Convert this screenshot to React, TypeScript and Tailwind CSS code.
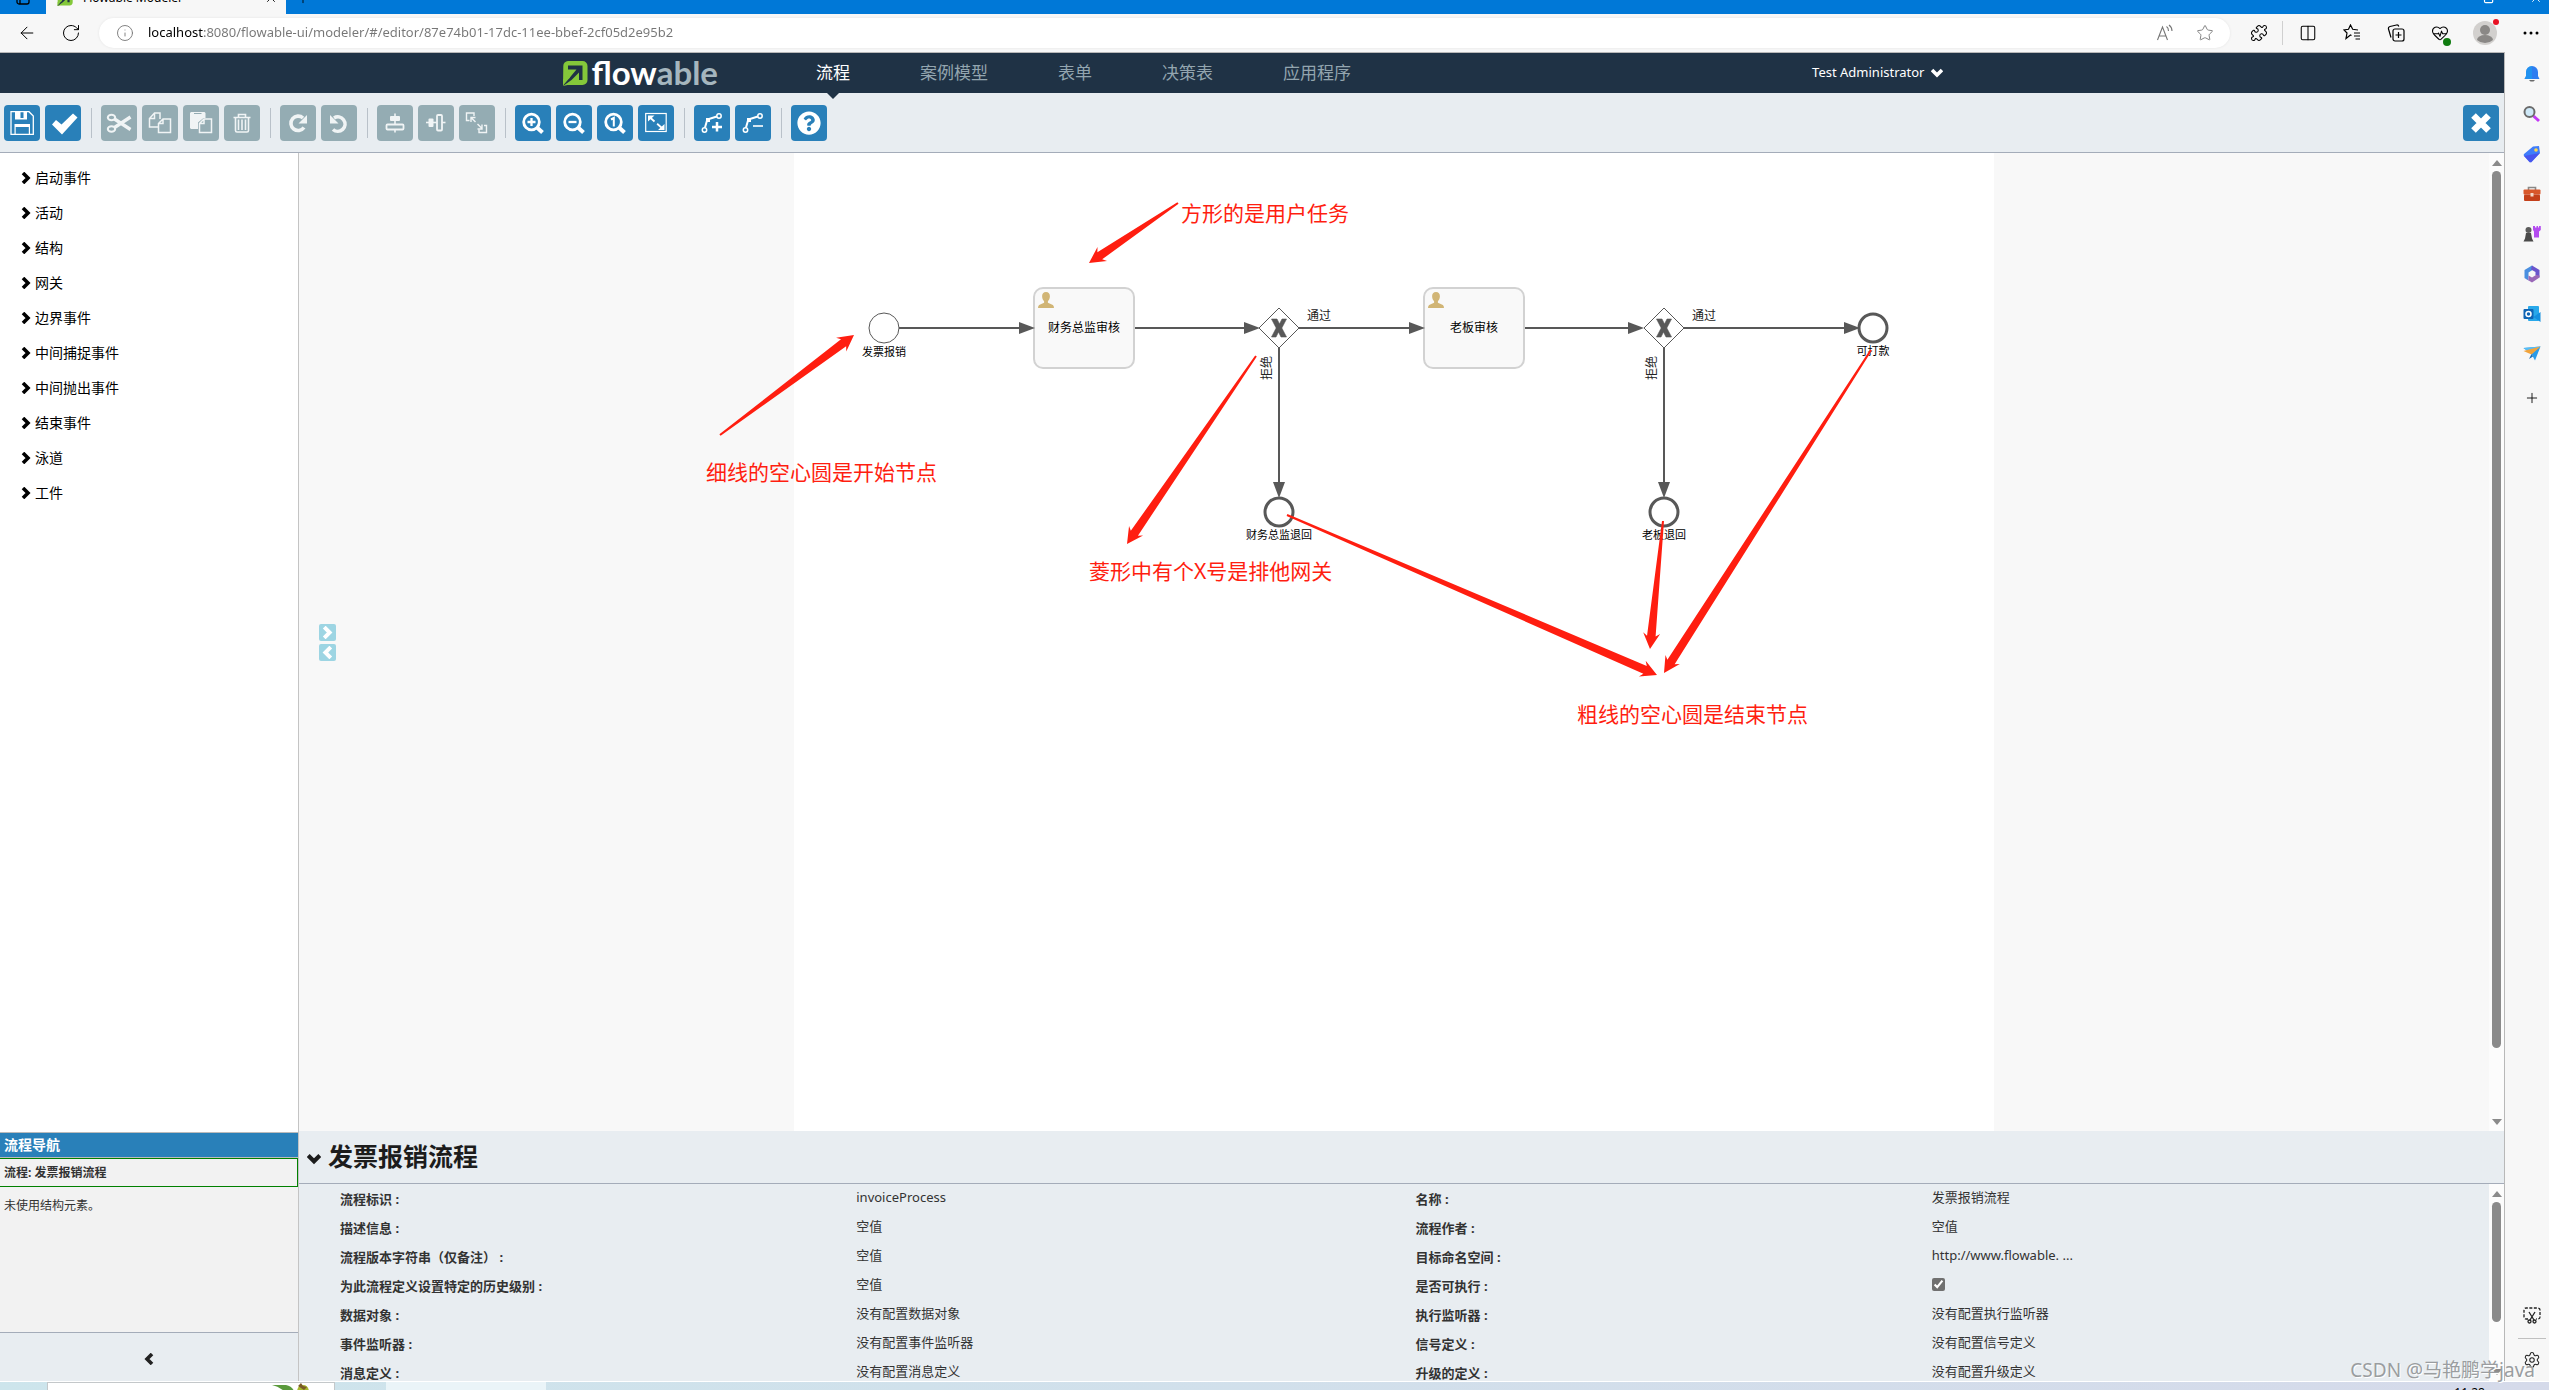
import type { ReactNode } from "react";
import {
  ArrowLeft,
  Columns2,
  HeartPulse,
  Info,
  Plus,
  Puzzle,
  RotateCw,
  Settings,
  Star,
  X,
} from "lucide-react";
import { FaQuestionCircle } from "react-icons/fa";

const URL_TEXT =
  "localhost:8080/flowable-ui/modeler/#/editor/87e74b01-17dc-11ee-bbef-2cf05d2e95b2";

const NAV_ITEMS = ["流程", "案例模型", "表单", "决策表", "应用程序"];

const PALETTE_GROUPS = [
  "启动事件",
  "活动",
  "结构",
  "网关",
  "边界事件",
  "中间捕捉事件",
  "中间抛出事件",
  "结束事件",
  "泳道",
  "工件",
];

type Property = { label: string; value: string | boolean };

const PROPERTIES: Property[] = [
  { label: "流程标识", value: "invoiceProcess" },
  { label: "名称", value: "发票报销流程" },
  { label: "描述信息", value: "空值" },
  { label: "流程作者", value: "空值" },
  { label: "流程版本字符串（仅备注）", value: "空值" },
  { label: "目标命名空间", value: "http://www.flowable. ..." },
  { label: "为此流程定义设置特定的历史级别", value: "空值" },
  { label: "是否可执行", value: true },
  { label: "数据对象", value: "没有配置数据对象" },
  { label: "执行监听器", value: "没有配置执行监听器" },
  { label: "事件监听器", value: "没有配置事件监听器" },
  { label: "信号定义", value: "没有配置信号定义" },
  { label: "消息定义", value: "没有配置消息定义" },
  { label: "升级的定义", value: "没有配置升级定义" },
];

/* ---------- shared bits ---------- */

type ChevronProps = { dir: "left" | "right" | "down"; className?: string };

const CHEVRON_POINTS = {
  left: "9,1 4,6 9,11",
  right: "3,1 8,6 3,11",
  down: "1,3 6,8 11,3",
};

function Chevron({ dir, className }: ChevronProps) {
  return (
    <svg viewBox="0 0 12 12" className={className} aria-hidden="true">
      <polyline
        points={CHEVRON_POINTS[dir]}
        fill="none"
        stroke="currentColor"
        strokeWidth="3.6"
      />
    </svg>
  );
}

function FlowableMark({ className }: { className?: string }) {
  return (
    <svg viewBox="0 0 26 26" className={className} aria-hidden="true">
      <path
        d="M6 1h14.5a5 5 0 0 1 5 5v14a5 5 0 0 1-5 5H5.5L1 26l.3-20A5 5 0 0 1 6 1z"
        fill="#84c83a"
      />
      <path
        d="M6 5.5h14.5V20H17v-7.5L9.5 20 1 26l1-5 5-2.5 7.5-9H6z"
        fill="#1f3245"
      />
      <path d="M1 19.5 9 14l-1.5 4L1 25.500z" fill="#84c83a" />
    </svg>
  );
}

type ScrollbarProps = { thumb: string };

function Scrollbar({ thumb }: ScrollbarProps) {
  return (
    <div className="flex w-[15px] shrink-0 flex-col items-center gap-[5px] bg-[#fcfcfc] pt-[7px] pb-1.5">
      <svg viewBox="0 0 10 6" className="h-1.5 w-2.5 shrink-0">
        <path d="M0 6 5 0l5 6z" fill="#8a8a8a" />
      </svg>
      <div className="min-h-0 w-full grow px-[3px]">
        <div className={`w-[9px] rounded-full bg-[#8a8a8a] ${thumb}`} />
      </div>
      <svg viewBox="0 0 10 6" className="h-1.5 w-2.5 shrink-0">
        <path d="M0 0h10L5 6z" fill="#8a8a8a" />
      </svg>
    </div>
  );
}

/* ---------- browser frame ---------- */

function TabStrip() {
  return (
    <div className="flex h-3.5 shrink-0 flex-col justify-end overflow-hidden bg-[#0078d7]">
      <div className="flex h-8 shrink-0 items-center">
        <button aria-label="标签操作" className="flex w-[46px] justify-center">
          <svg viewBox="0 0 14 14" className="size-3.5" fill="none" stroke="#000" strokeWidth="1.3">
            <rect x="1" y="1" width="12" height="12" rx="2" />
            <path d="M4 4v9M1 4.5h12" />
          </svg>
        </button>
        <div className="flex h-full w-[240px] items-center bg-[#f7f7f7] pr-2 pl-[11px] text-xs">
          <FlowableMark className="mr-2.5 size-4" />
          <span className="grow">Flowable Modeler</span>
          <button aria-label="关闭标签">
            <X className="size-3.5" strokeWidth={1.5} />
          </button>
        </div>
        <button aria-label="新建标签" className="ml-[9px]">
          <Plus className="size-4" strokeWidth={1.3} />
        </button>
        <div className="ml-auto flex gap-[34px] pr-1.5 text-white">
          <button aria-label="还原">
            <svg viewBox="0 0 12 12" className="size-3.5" fill="none" stroke="currentColor">
              <rect x="3" y="2" width="7" height="8" rx="1" />
            </svg>
          </button>
          <button aria-label="关闭">
            <X className="size-3.5" strokeWidth={1.5} />
          </button>
        </div>
      </div>
    </div>
  );
}

function AddressBar() {
  return (
    <div className="flex h-[38px] shrink-0 items-center bg-[#f7f7f7] pr-2.5 pl-[17px]">
      <button aria-label="后退" className="mr-6">
        <ArrowLeft className="size-5" strokeWidth={1.2} />
      </button>
      <button aria-label="刷新" className="mr-[18px]">
        <RotateCw className="size-5" strokeWidth={1.2} />
      </button>
      <div className="flex h-[30px] grow items-center rounded-full bg-white pr-4 pl-[17px] text-[#767676] shadow-[0_0_3px_rgba(0,0,0,0.08)]">
        <Info className="mr-3.5 size-[18px]" strokeWidth={1.2} />
        <input
          aria-label="地址"
          defaultValue={URL_TEXT}
          className="grow bg-linear-to-r from-black from-[56px] to-[#767676] to-[56px] bg-clip-text text-[13px] text-transparent outline-none"
        />
        <button aria-label="大声朗读" className="mr-[22px]">
          <svg viewBox="0 0 18 18" className="size-[18px]" fill="none" stroke="currentColor" strokeWidth="1.1">
            <path d="M1.5 16l5-13 5 13M3.2 12h6.6M10.5 2.5c1.5 1 2 2.500 2 4.500M13 1c2 1.500 3 3.500 3 6" />
          </svg>
        </button>
        <button aria-label="收藏">
          <Star className="size-[18px]" strokeWidth={1.2} />
        </button>
      </div>
      <div className="ml-5 flex items-center">
        <button aria-label="扩展" className="mr-3.5">
          <Puzzle className="size-[18px]" strokeWidth={1.4} />
        </button>
        <span className="mr-4 h-6 w-px bg-[#d0d0d0]" />
        <div className="flex items-center gap-[26px]">
          <button aria-label="拆分屏幕">
            <Columns2 className="size-[18px]" strokeWidth={1.4} />
          </button>
          <button aria-label="收藏夹">
            <svg viewBox="0 0 18 18" className="size-[18px]" fill="none" stroke="currentColor" strokeWidth="1.2">
              <path d="M8.5 11.5 7.5 11 3 14.5 4 9 1 6l4.500-.7L7.500 1l2.200 4.300 5.300.7M11 9h6M11 12h6M12.500 15H17" />
            </svg>
          </button>
          <button aria-label="集锦">
            <svg viewBox="0 0 18 18" className="size-[18px]" fill="none" stroke="currentColor" strokeWidth="1.2">
              <path d="M4 13.5 1.5 5A2 2 0 0 1 3 2.5L9.500 1a2 2 0 0 1 2.300 1.500" />
              <rect x="6" y="5" width="11" height="12" rx="2" />
              <path d="M11.5 8v6M8.5 11h6" />
            </svg>
          </button>
          <button aria-label="浏览器概要" className="relative">
            <HeartPulse className="size-[18px]" strokeWidth={1.4} />
            <span className="absolute -right-0.5 -bottom-1 size-2 rounded-full bg-[#107c10]" />
          </button>
        </div>
        <button aria-label="个人资料" className="relative ml-6">
          <svg viewBox="0 0 24 24" className="size-6">
            <circle cx="12" cy="12" r="12" fill="#d2d0ce" />
            <circle cx="12" cy="9" r="5" fill="#8a8886" />
            <path d="M4 19a8 5 0 0 1 16 0 12 12 0 0 1-16 0z" fill="#8a8886" />
          </svg>
          <span className="absolute -top-0.5 -right-0.5 size-1.5 rounded-full bg-[#e81123]" />
        </button>
        <button aria-label="设置及其他" className="ml-[26px]">
          <svg viewBox="0 0 16 4" className="h-1 w-4">
            <circle cx="2" cy="2" r="1.5" />
            <circle cx="8" cy="2" r="1.5" />
            <circle cx="14" cy="2" r="1.5" />
          </svg>
        </button>
      </div>
    </div>
  );
}

const SIDEBAR_APPS: { name: string; icon: ReactNode }[] = [
  {
    name: "通知",
    icon: (
      <>
        <path d="M9 1a6 6 0 0 1 6 6v4l1.5 3h-15L3 11V7a6 6 0 0 1 6-6z" fill="#2f7df0" />
        <path d="M9 1a6 6 0 0 0-6 6v4l-1.5 3H9z" fill="#1aa0f0" opacity=".6" />
        <path d="M6 15h6l-1.5 1.5h-3z" fill="#6b6b6b" />
      </>
    ),
  },
  {
    name: "搜索",
    icon: (
      <>
        <path d="m10.5 11 5.5 5" stroke="#c239f5" strokeWidth="3" />
        <circle cx="6.5" cy="7" r="5" fill="#cfe9f8" stroke="#6b6b6b" strokeWidth="2" />
      </>
    ),
  },
  {
    name: "购物",
    icon: (
      <>
        <path d="M10 1.5 16 1l1 7-8 8.5a2 2 0 0 1-3 0L1 11a2 2 0 0 1 0-2z" fill="#3f7dfa" />
        <path d="m1 11 16-3-8 8.5a2 2 0 0 1-3 0z" fill="#4b45e8" opacity=".7" />
        <circle cx="13" cy="5" r="1.8" fill="#ffd84d" />
      </>
    ),
  },
  {
    name: "工具",
    icon: (
      <>
        <path d="M5.5 5V2.5h7V5" fill="none" stroke="#8a8886" strokeWidth="1.6" />
        <rect x=".5" y="4.5" width="17" height="5" rx="1" fill="#d8572a" />
        <rect x="1" y="9.5" width="16" height="6.5" rx="1" fill="#c4401a" />
        <rect x="7.5" y="8" width="3" height="3.5" fill="#f3d9c8" />
      </>
    ),
  },
  {
    name: "游戏",
    icon: (
      <>
        <path d="M10 1h2v1.5h1.500V1H15v1.500h1V1h1.800v4L16 6.500v6h-5v-6L10 5z" fill="#b44cf0" />
        <circle cx="5.5" cy="5" r="3" fill="#5b5b5b" />
        <path d="M3 8h5l1 5.5 1.5 3H.5l1.500-3z" fill="#4a4a4a" />
      </>
    ),
  },
  {
    name: "Microsoft 365",
    icon: (
      <>
        <path d="M9 .5 1.500 5v8l4 2.500V7.500L11 4z" fill="#4a8fe0" />
        <path d="m9 .5 7.500 4.500v7.500L12.500 10V7L8 4.500z" fill="#6a55cc" />
        <path d="m1.500 13 7.500 4.500 7.500-5v-2L13 10l-4 2.500-3.500-2V15z" fill="#9a68b8" />
      </>
    ),
  },
  {
    name: "Outlook",
    icon: (
      <>
        <rect x="5" y="1" width="11" height="15" rx="1" fill="#28a8ea" />
        <path d="m17.5 7-7 5 7 5z" fill="#1490df" />
        <rect x=".5" y="4" width="10" height="10" rx="1" fill="#0f64b4" />
        <circle cx="5.5" cy="9" r="2.5" fill="none" stroke="#fff" strokeWidth="1.5" />
      </>
    ),
  },
  {
    name: "拖放",
    icon: (
      <>
        <path d="m.5 3 17-1.5L12 15.5 8.5 9z" fill="#2a9be8" />
        <path d="m.5 3 17-1.5L8.500 9z" fill="#57bdf5" />
        <path d="m.5 6 17-4.5-9 8z" fill="#f2a33a" />
        <path d="M8.5 9 6 14l4-2.5z" fill="#1b6fb8" />
      </>
    ),
  },
];

function EdgeSidebar() {
  return (
    <aside className="flex w-11 shrink-0 flex-col items-center bg-[#f7f7f7] pt-0.5 pb-3 pl-2.5">
      {SIDEBAR_APPS.map((app) => (
        <button
          key={app.name}
          aria-label={app.name}
          className="flex h-10 w-8 shrink-0 items-center justify-center"
        >
          <svg viewBox="0 0 18 18" className="size-[18px]">
            {app.icon}
          </svg>
        </button>
      ))}
      <button aria-label="自定义边栏" className="mt-4">
        <Plus className="size-4" strokeWidth={1.3} />
      </button>
      <button aria-label="网页捕获" className="mt-auto mb-3.5">
        <svg viewBox="0 0 18 18" className="size-[18px]" fill="none" stroke="#222" strokeWidth="1.3">
          <path
            d="M5 13H3a2 2 0 0 1-2-2V4a2 2 0 0 1 2-2h12a2 2 0 0 1 2 2v7a2 2 0 0 1-2 2h-2"
            strokeDasharray="3 1.5"
          />
          <path d="m6 6 5 8M12 6l-5 8" />
          <circle cx="6.5" cy="15.5" r="1.5" />
          <circle cx="11.5" cy="15.5" r="1.5" />
        </svg>
      </button>
      <span className="mb-3 h-px w-7 bg-[#c0c0c0]" />
      <button aria-label="边栏设置">
        <Settings className="size-[18px] text-[#222]" strokeWidth={1.4} />
      </button>
    </aside>
  );
}

/* ---------- modeler header ---------- */

function NavBar() {
  return (
    <header className="h-10 shrink-0 bg-[#1f3245]">
      <div className="mx-auto flex h-full w-[1381px] max-w-full items-center">
        <a href="#/" className="flex items-center gap-1">
          <FlowableMark className="size-[26px]" />
          <span className="pb-0.5 font-['Lato'] text-[33px] leading-8 font-bold text-white">
            flow<span className="text-[#a5b6be]">able</span>
          </span>
        </a>
        <nav className="ml-[63px] flex h-full">
          {NAV_ITEMS.map((item, index) => (
            <a
              key={item}
              href="#/"
              className={`relative flex h-full items-center px-[35px] text-[17px] ${
                index === 0 ? "text-white" : "text-[#93a5af]"
              }`}
            >
              {item}
              {index === 0 && (
                <svg
                  viewBox="0 0 12 6"
                  className="absolute top-full left-1/2 h-1.5 w-3 -translate-x-1/2"
                >
                  <path d="M0 0h12L6 6z" fill="#1f3245" />
                </svg>
              )}
            </a>
          ))}
        </nav>
        <button className="ml-auto flex items-center gap-1.5 text-[13px] text-white">
          Test Administrator
          <Chevron dir="down" className="size-3" />
        </button>
      </div>
    </header>
  );
}

type Tool = { name: string; disabled?: boolean; icon: ReactNode };

const line = { fill: "none", stroke: "currentColor" };

const TOOL_GROUPS: Tool[][] = [
  [
    {
      name: "保存",
      icon: (
        <>
          <path d="M7 6.7h18l4.300 4.300v18.300H7z" {...line} strokeWidth="1.3" />
          <path d="M11 6h12v8.5H11zM16.5 7v6h3V7z" fillRule="evenodd" />
          <path d="M10.5 19H26v10.5h-1.200V22H11.700v7.500h-1.200z" />
        </>
      ),
    },
    {
      name: "验证",
      icon: <path d="m7 19.5 4-4.5 5.5 4.5L28 8.500l4.500 4L17 29.500z" />,
    },
  ],
  [
    {
      name: "剪切",
      disabled: true,
      icon: (
        <g {...line}>
          <ellipse cx="10.5" cy="12.5" rx="3.7" ry="2.7" strokeWidth="2" />
          <ellipse cx="10.5" cy="24" rx="3.7" ry="2.7" strokeWidth="2" />
          <path d="m13.5 14 16 10.5M13.5 22.5l16-10.5" strokeWidth="3.3" />
        </g>
      ),
    },
    {
      name: "复制",
      disabled: true,
      icon: (
        <g {...line} strokeWidth="1.5">
          <path d="M16.5 22h-9v-8.5l5-5.500H18v6M7.5 13.5h5V8" />
          <path d="M16.5 18.5 21 14h7.5v13.5h-12zM16.5 18.5H21V14" />
        </g>
      ),
    },
    {
      name: "粘贴",
      disabled: true,
      icon: (
        <>
          <path d="M8 7h13.500l1 1v5h-2L15 17.500V24H8l-1-1V8z" />
          <path d="M11 8.5h7.500" stroke="#94acb3" strokeWidth="1" />
          <path d="M16.5 18.5 21 14h7.5v13.5h-12zM16.5 18.5H21V14" {...line} strokeWidth="1.5" />
        </>
      ),
    },
    {
      name: "删除",
      disabled: true,
      icon: (
        <g {...line} strokeWidth="1.6">
          <path d="M9.5 12.5h17M14.5 12V9.5h7V12M11.5 13v12.500q0 1.500 1.500 1.500h10q1.500 0 1.500-1.500V13" />
          <path d="M14.5 14.5V25M18 14.5V25M21.5 14.5V25" />
        </g>
      ),
    },
  ],
  [
    {
      name: "重做",
      disabled: true,
      icon: (
        <>
          <path d="M24 22.5a7.2 7.2 0 1 1-1-9.5" {...line} strokeWidth="3.6" />
          <path d="M27 10v8.5h-8.500z" />
        </>
      ),
    },
    {
      name: "撤销",
      disabled: true,
      icon: (
        <>
          <path d="M12 24.5a7.200 7.200 0 1 0 1-11.500" {...line} strokeWidth="3.6" />
          <path d="M9 10v8.5h8.500z" />
        </>
      ),
    },
  ],
  [
    {
      name: "垂直对齐",
      disabled: true,
      icon: (
        <>
          <path d="M18 8.5v19" {...line} strokeWidth="1.6" />
          <rect x="13" y="11" width="10" height="5" rx="1" />
          <rect x="9.5" y="19.5" width="17" height="5" rx="1" fill="#94acb3" stroke="currentColor" strokeWidth="1.8" />
        </>
      ),
    },
    {
      name: "水平对齐",
      disabled: true,
      icon: (
        <>
          <path d="M8 17.5h19.5" {...line} strokeWidth="1.6" />
          <rect x="10.5" y="13.5" width="5" height="8.5" rx="1" />
          <rect x="19" y="10" width="5" height="15.5" rx="1" fill="#94acb3" stroke="currentColor" strokeWidth="1.8" />
        </>
      ),
    },
    {
      name: "相同大小",
      disabled: true,
      icon: (
        <g {...line} strokeWidth="1.4">
          <path d="M10.5 15.5h-3V8H15v3" />
          <path d="m16.5 17-4-4M12 17v-4.500h4.500" />
          <path d="M25 20.5h2.500v7H20v-3" />
          <path d="m18.5 19 4 4M23 19.5V24h-4.500" />
        </g>
      ),
    },
  ],
  [
    {
      name: "放大",
      icon: (
        <g {...line}>
          <circle cx="16.5" cy="17" r="7.8" strokeWidth="2.8" />
          <path d="m22 22.5 5.500 5" strokeWidth="4" />
          <path d="M16.5 13v8M12.5 17h8" strokeWidth="2.3" />
        </g>
      ),
    },
    {
      name: "缩小",
      icon: (
        <g {...line}>
          <circle cx="16.5" cy="17" r="7.8" strokeWidth="2.8" />
          <path d="m22 22.5 5.500 5" strokeWidth="4" />
          <path d="M12.5 17h8" strokeWidth="2.3" />
        </g>
      ),
    },
    {
      name: "实际大小",
      icon: (
        <g {...line}>
          <circle cx="16.5" cy="17" r="7.8" strokeWidth="2.8" />
          <path d="m22 22.5 5.500 5" strokeWidth="4" />
          <path d="M14 14.500 16.800 13v8.500" strokeWidth="2" />
        </g>
      ),
    },
    {
      name: "适应窗口",
      icon: (
        <>
          <rect x="7.7" y="8.5" width="20.5" height="18" {...line} strokeWidth="1.2" />
          <path d="m12 12.5 12.5 11" {...line} strokeWidth="1.8" strokeDasharray="6 3.5" />
          <path d="M10 10.5h6.500L10 16.500zM26.500 25H20l6.500-6z" />
        </>
      ),
    },
  ],
  [
    {
      name: "添加弯曲点",
      icon: (
        <g {...line} strokeWidth="1.5">
          <circle cx="10.5" cy="25" r="2.2" />
          <circle cx="25" cy="11" r="2.2" />
          <path d="m11 22.5 2.300-8 9.500-3" strokeWidth="2" />
          <path d="M12 13h4v4h-4z" fill="currentColor" stroke="none" />
          <path d="M23 17v9.500M18 22h10" strokeWidth="2.5" />
        </g>
      ),
    },
    {
      name: "移除弯曲点",
      icon: (
        <g {...line} strokeWidth="1.5">
          <circle cx="10.5" cy="25" r="2.2" />
          <circle cx="25" cy="11" r="2.2" />
          <path d="m11 22.5 2.300-8 9.500-3" strokeWidth="2" />
          <path d="M12 13h4v4h-4z" fill="currentColor" stroke="none" />
          <path d="M18 21h10" strokeWidth="1.6" />
        </g>
      ),
    },
  ],
];

function ToolButton({ name, disabled, icon }: Tool) {
  return (
    <button
      aria-label={name}
      disabled={disabled}
      className={`flex size-9 items-center justify-center rounded-sm ${
        disabled ? "bg-[#94acb3] text-[#f0f4f5]" : "bg-[#2980b9] text-white"
      }`}
    >
      <svg viewBox="0 0 36 36" className="size-9" fill="currentColor">
        {icon}
      </svg>
    </button>
  );
}

function Divider() {
  return <span className="mr-1 ml-[5px] h-[30px] w-px bg-[#b9c1c9]" />;
}

function Toolbar() {
  return (
    <div className="flex h-[60px] shrink-0 items-center gap-[5px] border-b border-[#a4acb9] bg-[#e8edf1] pt-px pr-[5px] pl-1">
      {TOOL_GROUPS.map((group) => (
        <div key={group[0].name} className="flex items-center gap-[5px]">
          {group.map((tool) => (
            <ToolButton key={tool.name} {...tool} />
          ))}
          <Divider />
        </div>
      ))}
      <button
        aria-label="帮助"
        className="flex size-9 items-center justify-center rounded-sm bg-[#2980b9] text-white"
      >
        <FaQuestionCircle className="size-6" />
      </button>
      <button
        aria-label="关闭编辑器"
        className="ml-auto flex size-9 items-center justify-center rounded-sm bg-[#2980b9] text-white"
      >
        <svg viewBox="0 0 20 20" className="size-5" {...line} strokeWidth="6.5">
          <path d="m2.5 2.5 15 15M17.5 2.5l-15 15" />
        </svg>
      </button>
    </div>
  );
}

/* ---------- left column ---------- */

function Palette() {
  return (
    <div className="flex w-[299px] shrink-0 flex-col border-r border-[#c4c4c4] bg-white">
      <ul className="min-h-0 grow overflow-hidden pt-[7px]">
        {PALETTE_GROUPS.map((group) => (
          <li key={group}>
            <button className="flex h-[35px] items-center gap-[3px] pl-5 text-sm text-black">
              <Chevron dir="right" className="size-3" />
              {group}
            </button>
          </li>
        ))}
      </ul>
      <section className="flex h-[200px] shrink-0 flex-col bg-[#f2f2f2] text-xs text-[#333]">
        <h2 className="flex h-[26px] items-center border-y border-[#bbb] bg-[#2980b9] pl-1 text-sm font-bold text-white">
          流程导航
        </h2>
        <div className="flex h-[29px] items-center border border-l-0 border-[#008000] pl-1 font-bold">
          流程: 发票报销流程
        </div>
        <p className="px-1 pt-[11px] leading-4">未使用结构元素。</p>
      </section>
      <button
        aria-label="收起面板"
        className="flex h-[49px] shrink-0 items-center justify-center border-t border-[#a4acb9] bg-[#e8edf1] pt-1 text-[#222]"
      >
        <Chevron dir="left" className="size-3" />
      </button>
    </div>
  );
}

/* ---------- diagram ---------- */

type Point = [number, number];

const STROKE = "#585858";

const FLOWS: [Point, Point][] = [
  [[105, 175], [241, 175]],
  [[341, 175], [466, 175]],
  [[505, 175], [631, 175]],
  [[731, 175], [850, 175]],
  [[890, 175], [1066, 175]],
  [[485, 195], [485, 345]],
  [[870, 195], [870, 345]],
];

const GATEWAYS: Point[] = [
  [485, 175],
  [870, 175],
];

const END_EVENTS: Point[] = [
  [485, 359],
  [870, 359],
  [1079, 175],
];

const POINTERS: [Point, Point][] = [
  [[384, 50], [295, 110]],
  [[-74, 282], [60, 182]],
  [[462, 203], [333, 391]],
  [[493, 362], [863, 522]],
  [[869, 368], [856, 496]],
  [[1077, 197], [870, 520]],
];

// tapered arrow: thin at the tail, barbed at the tip
function pointerPath([x1, y1]: Point, [x2, y2]: Point) {
  const len = Math.hypot(x2 - x1, y2 - y1);
  const ux = (x2 - x1) / len;
  const uy = (y2 - y1) / len;
  const at = (along: number, side: number) =>
    `${x1 + ux * along - uy * side},${y1 + uy * along + ux * side}`;
  return `M${[
    at(0, -1),
    at(len - 13, -4.3),
    at(len - 16, -8.5),
    at(len, 0),
    at(len - 16, 8.5),
    at(len - 13, 4.3),
    at(0, 1),
  ].join("L")}Z`;
}

function FlowArrow({ from, to }: { from: Point; to: Point }) {
  const [x, y] = to;
  const down = from[0] === to[0];
  return (
    <g fill={STROKE}>
      <line
        x1={from[0]}
        y1={from[1]}
        x2={down ? x : x - 8}
        y2={down ? y - 8 : y}
        stroke={STROKE}
        strokeWidth="2"
      />
      <path d={down ? `M${x} ${y}l-6-16h12z` : `M${x} ${y}l-16-6v12z`} />
    </g>
  );
}

type LabelProps = { className: string; children: ReactNode };

function EventLabel({ className, children }: LabelProps) {
  return (
    <span
      className={`absolute -translate-x-1/2 text-[11px] leading-4 whitespace-nowrap text-black ${className}`}
    >
      {children}
    </span>
  );
}

function FlowLabel({ className, children }: LabelProps) {
  return (
    <span
      className={`absolute text-xs leading-4 whitespace-nowrap text-[#222] ${className}`}
    >
      {children}
    </span>
  );
}

function Note({ className, children }: LabelProps) {
  return (
    <p
      className={`absolute text-[21px] leading-6 whitespace-nowrap text-[#ff1e10] ${className}`}
    >
      {children}
    </p>
  );
}

function UserTask({ className, children }: LabelProps) {
  return (
    <div
      className={`absolute flex h-[82px] w-[102px] items-center justify-center rounded-[10px] border-2 border-[#d2d2d2] bg-[#f9f9f9] text-xs text-black ${className}`}
    >
      <svg viewBox="0 0 16 16" className="absolute top-[3px] left-[3px] size-4">
        <path
          d="M8 0c2.600 0 3.900 1.900 3.900 4.300 0 2.200-.9 4-2 5v1.500l5 2.200q1.100.8 1.100 3H0q0-2.200 1.100-3l5-2.200V9.300c-1.100-1-2-2.800-2-5C4.100 1.900 5.400 0 8 0z"
          fill="#d1b575"
        />
      </svg>
      {children}
    </div>
  );
}

function Canvas() {
  return (
    <div className="flex min-h-0 grow">
      <div className="relative flex min-w-0 grow justify-center overflow-hidden bg-[#f8f8f8]">
        <div className="absolute top-[471px] left-5 z-10 flex flex-col gap-[3px]">
          <button aria-label="展开" className="rounded-xs bg-[#9dd5e3] text-white">
            <Chevron dir="right" className="m-0.5 size-[13px]" />
          </button>
          <button aria-label="收起" className="rounded-xs bg-[#9dd5e3] text-white">
            <Chevron dir="left" className="m-0.5 size-[13px]" />
          </button>
        </div>
        <div className="relative w-[1200px] shrink-0 bg-white">
          <UserTask className="top-[134px] left-[239px]">财务总监审核</UserTask>
          <UserTask className="top-[134px] left-[629px]">老板审核</UserTask>
          <svg width="1200" height="600" className="absolute top-0 left-0 overflow-visible">
            {FLOWS.map(([from, to]) => (
              <FlowArrow key={`${from}-${to}`} from={from} to={to} />
            ))}
            <circle cx="90" cy="175" r="15" fill="#fff" stroke={STROKE} />
            {GATEWAYS.map(([x, y]) => (
              <g key={x}>
                <path
                  d={`M${x} ${y - 20}l20 20-20 20-20-20z`}
                  fill="#fff"
                  stroke={STROKE}
                />
                <path
                  d={`M${x - 7.5} ${y - 9}h5.500l2.500 5 2.500-5h4.500l-4.700 9 4.700 9h-5.500l-2.500-5-2.500 5h-4.500l4.700-9z`}
                  fill={STROKE}
                  stroke={STROKE}
                  strokeWidth=".6"
                />
              </g>
            ))}
            {END_EVENTS.map(([x, y]) => (
              <circle
                key={`${x}-${y}`}
                cx={x}
                cy={y}
                r="14"
                fill="#fff"
                stroke={STROKE}
                strokeWidth="3"
              />
            ))}
          </svg>
          <EventLabel className="top-[191px] left-[90px]">发票报销</EventLabel>
          <EventLabel className="top-[374px] left-[485px]">财务总监退回</EventLabel>
          <EventLabel className="top-[374px] left-[870px]">老板退回</EventLabel>
          <EventLabel className="top-[190px] left-[1079px]">可打款</EventLabel>
          <FlowLabel className="top-[155px] left-[513px]">通过</FlowLabel>
          <FlowLabel className="top-[155px] left-[898px]">通过</FlowLabel>
          <FlowLabel className="top-[207px] left-[461px] -rotate-90">拒绝</FlowLabel>
          <FlowLabel className="top-[207px] left-[846px] -rotate-90">拒绝</FlowLabel>
          <svg width="1200" height="600" className="absolute top-0 left-0 overflow-visible">
            {POINTERS.map(([from, to]) => (
              <path key={`${from}`} d={pointerPath(from, to)} fill="#ff1e10" />
            ))}
          </svg>
          <Note className="top-12 left-[387px]">方形的是用户任务</Note>
          <Note className="top-[307px] -left-[88px]">细线的空心圆是开始节点</Note>
          <Note className="top-[406px] left-[295px]">菱形中有个X号是排他网关</Note>
          <Note className="top-[549px] left-[783px]">粗线的空心圆是结束节点</Note>
        </div>
      </div>
      <Scrollbar thumb="h-[93%]" />
    </div>
  );
}

/* ---------- properties ---------- */

function PropertyRow({ label, value }: Property) {
  return (
    <div className="grid h-[29px] grid-cols-[48%_52%] text-[13px] leading-5">
      <dt className="pt-0.5 font-bold">
        {value === true ? <label htmlFor="executable">{label} :</label> : `${label} :`}
      </dt>
      <dd className="pl-px">
        {value === true ? (
          <input
            id="executable"
            type="checkbox"
            defaultChecked
            className="mt-1 block size-[13px] accent-[#707070]"
          />
        ) : (
          value
        )}
      </dd>
    </div>
  );
}

function PropertiesPanel() {
  return (
    <section className="flex h-[250px] shrink-0 flex-col bg-[#e8edf1] text-[#333]">
      <h1 className="flex h-[53px] shrink-0 items-center border-b border-[#a4acb9] pl-2 text-[25px] font-bold text-[#1c1c1c]">
        <button aria-label="收起属性" className="mr-[7px] pt-1">
          <Chevron dir="down" className="size-3.5" />
        </button>
        发票报销流程
      </h1>
      <div className="flex min-h-0 grow">
        <dl className="grid min-w-0 grow auto-rows-min grid-cols-2 gap-x-0.5 overflow-hidden pt-[3px] pl-[41px]">
          {PROPERTIES.map((property) => (
            <PropertyRow key={property.label} {...property} />
          ))}
        </dl>
        <Scrollbar thumb="h-[120px]" />
      </div>
    </section>
  );
}

function Taskbar() {
  return (
    <footer className="flex h-[9px] shrink-0 overflow-hidden border-t border-white bg-linear-to-r from-[#cde5ec] to-[#d5daea] pl-[47px]">
      <div className="flex h-8 w-[288px] justify-end border border-[#c4c8ca] bg-white pr-6">
        <svg viewBox="0 0 38 8" className="h-2 w-[38px]">
          <path d="M0 2h14q6 1 8 6H12Q6 3 0 2z" fill="#5a9a3c" />
          <path d="M25 8q1-6 6-6t6 6z" fill="#a8b82c" />
          <path d="m26 3 3-3 2 3 4 1-3 3z" fill="#7a5a28" />
        </svg>
      </div>
      <div className="ml-[51px] h-8 w-[160px] bg-[#eaf4f8]" />
      <span className="mt-[5px] mr-16 ml-auto text-xs leading-3 text-black">11:28</span>
    </footer>
  );
}

export default function App() {
  return (
    <div className="relative flex h-screen flex-col overflow-hidden font-['Noto_Sans','Noto_Sans_CJK_SC',sans-serif] text-black">
      <TabStrip />
      <AddressBar />
      <div className="flex min-h-0 grow bg-[#f7f7f7]">
        <main className="flex min-w-0 grow flex-col border-t border-r border-[#b8b8b8]">
          <NavBar />
          <Toolbar />
          <div className="flex min-h-0 grow">
            <Palette />
            <div className="flex min-w-0 grow flex-col">
              <Canvas />
              <PropertiesPanel />
            </div>
          </div>
        </main>
        <EdgeSidebar />
      </div>
      <Taskbar />
      <div className="pointer-events-none absolute right-3.5 bottom-1.5 text-[19px] leading-7 text-[#9a9da0] [text-shadow:1px_1px_0_#fff]">
        CSDN @马艳鹏学java
      </div>
    </div>
  );
}
